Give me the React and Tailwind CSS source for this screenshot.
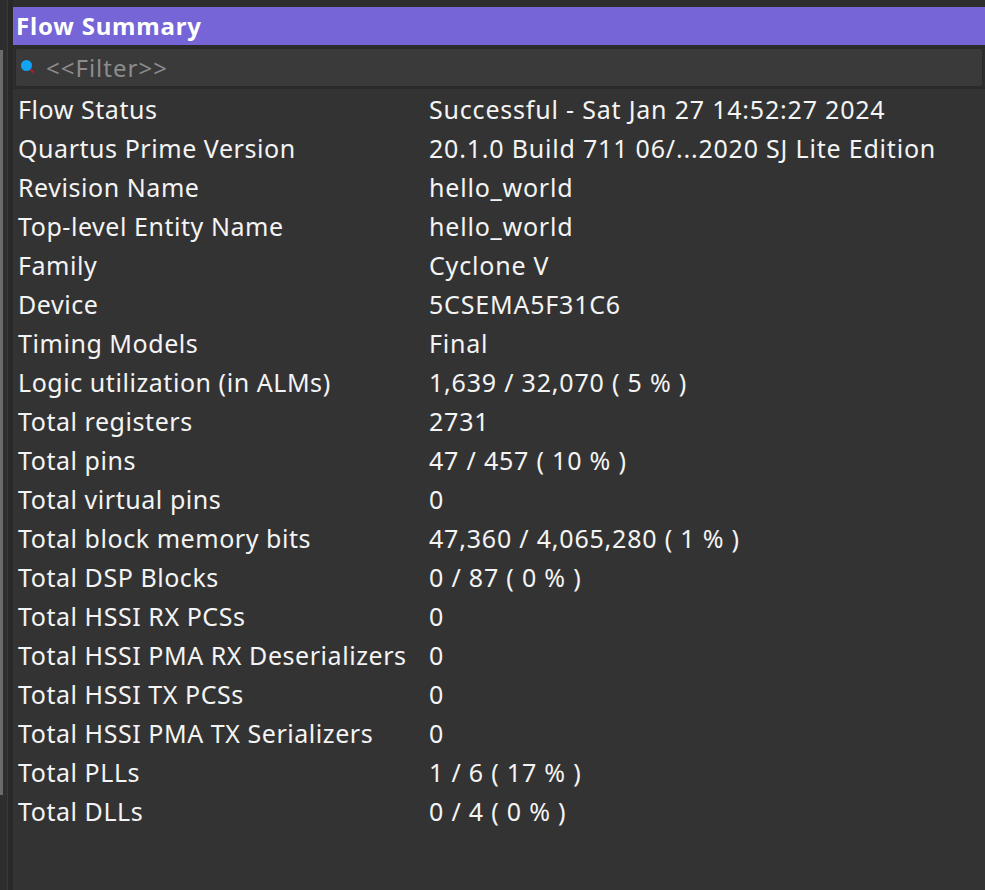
const rows = [
  ['Flow Status', 'Successful - Sat Jan 27 14:52:27 2024'],
  ['Quartus Prime Version', '20.1.0 Build 711 06/...2020 SJ Lite Edition'],
  ['Revision Name', 'hello_world'],
  ['Top-level Entity Name', 'hello_world'],
  ['Family', 'Cyclone V'],
  ['Device', '5CSEMA5F31C6'],
  ['Timing Models', 'Final'],
  ['Logic utilization (in ALMs)', '1,639 / 32,070 ( 5 % )'],
  ['Total registers', '2731'],
  ['Total pins', '47 / 457 ( 10 % )'],
  ['Total virtual pins', '0'],
  ['Total block memory bits', '47,360 / 4,065,280 ( 1 % )'],
  ['Total DSP Blocks', '0 / 87 ( 0 % )'],
  ['Total HSSI RX PCSs', '0'],
  ['Total HSSI PMA RX Deserializers', '0'],
  ['Total HSSI TX PCSs', '0'],
  ['Total HSSI PMA TX Serializers', '0'],
  ['Total PLLs', '1 / 6 ( 17 % )'],
  ['Total DLLs', '0 / 4 ( 0 % )'],
];

function SearchDot() {
  return (
    <svg width="18" height="18" viewBox="0 0 18 18" className="shrink-0">
      <line x1="9" y1="9" x2="13.5" y2="13.5" stroke="#c0162a" strokeWidth="2" />
      <circle cx="6.5" cy="6.5" r="5.5" fill="#12a4f0" />
    </svg>
  );
}

export default function App() {
  return (
    <div
      className="w-[985px] h-[890px] bg-[#2e2e2e] flex overflow-hidden text-white"
      style={{ fontFamily: '"Noto Sans", "Open Sans", sans-serif' }}
    >
      {/* left gutter */}
      <div className="w-[13px] flex shrink-0">
        <div className="w-[3px] flex flex-col">
          <div className="h-[50px]" />
          <div className="h-[745px] bg-[#6b6b6b]" />
        </div>
        <div className="w-[4px]" />
        <div className="w-[6px] bg-[#292929] border-l border-[#3a3a3a]" />
      </div>

      <div className="flex-1 flex flex-col min-w-0">
        <div className="h-[7px] bg-[#2e2e2e]" />
        <div className="h-[38px] bg-[#7565d6] flex items-center pl-[3px] text-[24px] font-bold leading-none tracking-[0.8px]">
          Flow Summary
        </div>
        <div className="h-[3px] bg-[#2b2b2b]" />
        <div className="h-[39px] mx-[2px] bg-[#3a3a3a] border border-[#2a2a2a] rounded-[3px] flex items-center gap-[8px] pl-[4px]">
          <SearchDot />
          <span className="text-[24px] text-[#8c8c8c] leading-none tracking-[1px]">&lt;&lt;Filter&gt;&gt;</span>
        </div>
        <div className="h-[2px] bg-[#2b2b2b]" />
        <div className="flex-1 bg-[#333333] pt-[1px]">
          {rows.map(([k, v]) => (
            <div key={k} className="h-[39px] flex items-center text-[25px] leading-none text-[#f4f4f4]">
              <div className="w-[416px] pl-[5px] shrink-0 whitespace-nowrap tracking-[0.55px]">{k}</div>
              <div className="whitespace-nowrap tracking-[0.8px]">{v}</div>
            </div>
          ))}
        </div>
      </div>
    </div>
  );
}
